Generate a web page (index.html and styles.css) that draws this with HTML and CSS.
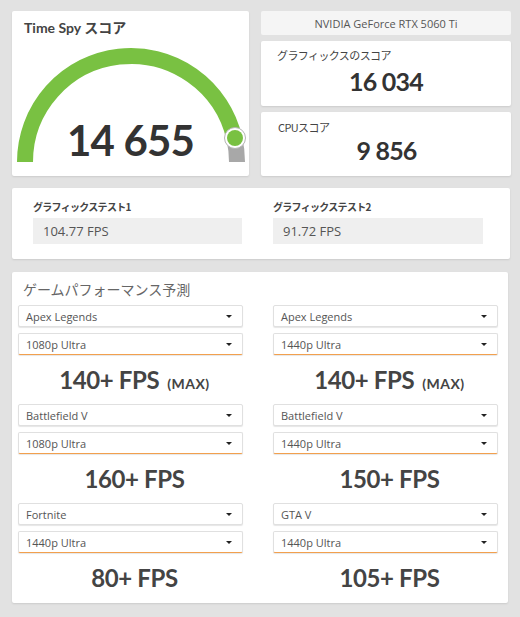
FILE: index.html
```html
<!DOCTYPE html>
<html lang="ja">
<head>
<meta charset="utf-8">
<title>Time Spy</title>
<link rel="stylesheet" href="styles.css">
</head>
<body>
<div class="page">
  <div class="top">
    <section class="card score-card">
      <h1 class="score-title">Time Spy スコア</h1>
      <div class="gauge">
        <svg class="gauge-svg" width="237" height="135" viewBox="0 0 237 135">
          <path d="M13 121 A106 106 0 0 1 222.3 97.2" fill="none" stroke="#79c142" stroke-width="16"/>
          <path d="M222.3 97.2 A106 106 0 0 1 225 121" fill="none" stroke="#a8a8a8" stroke-width="16"/>
          <circle cx="223" cy="97" r="10.5" fill="#ffffff" stroke="#b5b5b5" stroke-width="1"/>
          <circle cx="223" cy="97" r="8" fill="#79c142"/>
        </svg>
        <div class="gauge-value">14 655</div>
      </div>
    </section>
    <div class="side">
      <div class="gpu-name">NVIDIA GeForce RTX 5060 Ti</div>
      <section class="card sub-card gfx">
        <div class="sub-label">グラフィックスのスコア</div>
        <div class="sub-value">16 034</div>
      </section>
      <section class="card sub-card cpu">
        <div class="sub-label">CPUスコア</div>
        <div class="sub-value">9 856</div>
      </section>
    </div>
  </div>

  <section class="card tests">
    <div class="test">
      <div class="test-label">グラフィックステスト1</div>
      <div class="test-field">104.77 FPS</div>
    </div>
    <div class="test">
      <div class="test-label">グラフィックステスト2</div>
      <div class="test-field">91.72 FPS</div>
    </div>
  </section>

  <section class="card perf">
    <h2 class="perf-title">ゲームパフォーマンス予測</h2>
    <div class="games">
      <div class="game">
        <div class="select"><span>Apex Legends</span><i class="caret"></i></div>
        <div class="select active"><span>1080p Ultra</span><i class="caret"></i></div>
        <div class="fps">140+ FPS<small class="max">(MAX)</small></div>
      </div>
      <div class="game">
        <div class="select"><span>Apex Legends</span><i class="caret"></i></div>
        <div class="select active"><span>1440p Ultra</span><i class="caret"></i></div>
        <div class="fps">140+ FPS<small class="max">(MAX)</small></div>
      </div>
      <div class="game">
        <div class="select"><span>Battlefield V</span><i class="caret"></i></div>
        <div class="select active"><span>1080p Ultra</span><i class="caret"></i></div>
        <div class="fps">160+ FPS</div>
      </div>
      <div class="game">
        <div class="select"><span>Battlefield V</span><i class="caret"></i></div>
        <div class="select active"><span>1440p Ultra</span><i class="caret"></i></div>
        <div class="fps">150+ FPS</div>
      </div>
      <div class="game">
        <div class="select"><span>Fortnite</span><i class="caret"></i></div>
        <div class="select active"><span>1440p Ultra</span><i class="caret"></i></div>
        <div class="fps">80+ FPS</div>
      </div>
      <div class="game">
        <div class="select"><span>GTA V</span><i class="caret"></i></div>
        <div class="select active"><span>1440p Ultra</span><i class="caret"></i></div>
        <div class="fps">105+ FPS</div>
      </div>
    </div>
  </section>
</div>
</body>
</html>
```

FILE: styles.css
```css
* { box-sizing: border-box; }
html, body { margin: 0; padding: 0; }
body {
  background: #e2e2e2;
  font-family: Lato, "Noto Sans CJK JP", sans-serif;
  color: #444;
  width: 520px;
  height: 617px;
  overflow: hidden;
}
.page {
  padding: 11px 0 0 12px;
}
.card {
  background: #ffffff;
  border-radius: 2px;
  box-shadow: 0 1px 2px rgba(0,0,0,0.10);
}
.top {
  display: grid;
  grid-template-columns: 237px 250px;
  column-gap: 12px;
  height: 165px;
}
.score-card {
  display: flex;
  flex-direction: column;
  height: 165px;
}
.score-title {
  margin: 0;
  padding: 9px 0 0 12px;
  height: 30px;
  font-family: Lato, "Noto Sans CJK JP", sans-serif;
  font-size: 14px;
  line-height: 16px;
  font-weight: 700;
  color: #444;
}
.gauge {
  display: grid;
  height: 135px;
}
.gauge-svg {
  grid-area: 1 / 1;
  display: block;
}
.gauge-value {
  grid-area: 1 / 1;
  align-self: start;
  justify-self: start;
  width: 237px;
  margin-top: 78px;
  text-align: center;
  font-size: 42px;
  line-height: 42px;
  font-weight: 700;
  letter-spacing: -0.8px;
  color: #333;
}
.side {
  display: flex;
  flex-direction: column;
  gap: 6px;
}
.gpu-name {
  height: 24px;
  background: #f5f5f5;
  border-radius: 2px;
  display: flex;
  align-items: center;
  justify-content: center;
  font-family: "Open Sans", "Noto Sans CJK JP", sans-serif;
  font-size: 11px;
  color: #555;
}
.sub-card {
  display: flex;
  flex-direction: column;
}
.gfx { height: 65px; padding: 7px 0 0 16px; }
.cpu { height: 64px; padding: 8px 0 0 17px; }
.sub-label {
  font-family: "Noto Sans CJK JP", sans-serif;
  font-size: 11px;
  line-height: 14px;
  letter-spacing: -0.6px;
  color: #444;
}
.sub-value {
  font-size: 25px;
  line-height: 26px;
  font-weight: 700;
  letter-spacing: -0.8px;
  color: #333;
  text-align: center;
  padding-right: 16px;
}
.gfx .sub-value { margin-top: 6px; }
.cpu .sub-value { margin-top: 3px; }

.tests {
  margin-top: 12px;
  width: 498px;
  height: 71px;
  display: grid;
  grid-template-columns: 209px 210px;
  column-gap: 31px;
  padding: 13px 0 0 21px;
}
.test-label {
  font-family: "Noto Sans CJK JP", sans-serif;
  font-size: 10px;
  line-height: 12px;
  font-weight: 700;
  letter-spacing: -0.7px;
  color: #444;
}
.test-field {
  margin-top: 5px;
  height: 26px;
  background: #efefef;
  display: flex;
  align-items: center;
  padding-left: 10px;
  font-family: "Open Sans", sans-serif;
  font-size: 13px;
  color: #555;
}

.perf {
  margin-top: 13px;
  width: 496px;
  height: 331px;
  padding: 8px 10px 0 6px;
}
.perf-title {
  margin: 0 0 7px 5px;
  font-family: "Noto Sans CJK JP", sans-serif;
  font-size: 14px;
  line-height: 18px;
  font-weight: 400;
  color: #666;
}
.games {
  display: grid;
  grid-template-columns: 225px 225px;
  column-gap: 30px;
}
.game {
  display: flex;
  flex-direction: column;
  gap: 6px;
}
.select {
  height: 22px;
  background: #ffffff;
  border: 1px solid #e0e0e0;
  border-radius: 2px;
  box-shadow: 0 1px 1px rgba(0,0,0,0.10);
  display: flex;
  align-items: center;
  justify-content: space-between;
  padding: 0 10px 0 7px;
  font-family: "Open Sans", sans-serif;
  font-size: 11px;
  color: #555;
}
.select.active {
  border-bottom-color: #f2a04e;
}
.caret {
  width: 0;
  height: 0;
  border-left: 3px solid transparent;
  border-right: 3px solid transparent;
  border-top: 3px solid #222;
}
.fps {
  height: 49px;
  margin-top: -6px;
  text-align: center;
  line-height: 49px;
  font-size: 24px;
  font-weight: 700;
  letter-spacing: -0.4px;
  color: #444;
  padding-left: 8px;
}
.max {
  font-size: 14px;
  font-weight: 700;
  margin-left: 8px;
  letter-spacing: 0.5px;
}
```
